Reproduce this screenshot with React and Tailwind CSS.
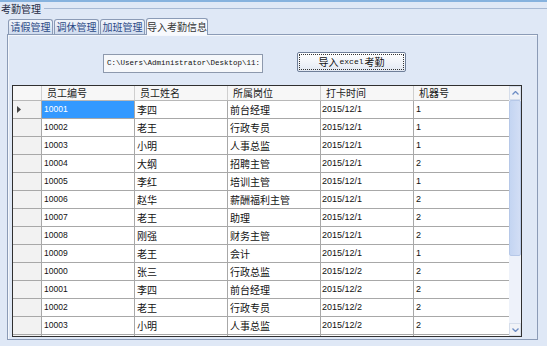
const rows = [
  ["10001", "李四", "前台经理", "2015/12/1", "1"],
  ["10002", "老王", "行政专员", "2015/12/1", "1"],
  ["10003", "小明", "人事总监", "2015/12/1", "1"],
  ["10004", "大纲", "招聘主管", "2015/12/1", "2"],
  ["10005", "李红", "培训主管", "2015/12/1", "1"],
  ["10006", "赵华", "薪酬福利主管", "2015/12/1", "2"],
  ["10007", "老王", "助理", "2015/12/1", "2"],
  ["10008", "刚强", "财务主管", "2015/12/1", "2"],
  ["10009", "老王", "会计", "2015/12/1", "1"],
  ["10000", "张三", "行政总监", "2015/12/2", "2"],
  ["10001", "李四", "前台经理", "2015/12/2", "2"],
  ["10002", "老王", "行政专员", "2015/12/2", "2"],
  ["10003", "小明", "人事总监", "2015/12/2", "2"],
  ["10004", "大纲", "招聘主管", "2015/12/2", "2"],
];

const cn = "font-['Noto_Sans_CJK_SC',sans-serif]";
const mono = "font-['Liberation_Mono',monospace]";
const sans = "font-['Liberation_Sans',sans-serif]";
const tabs = ["请假管理", "调休管理", "加班管理"];

const App = () => {
  return (
    <div className={`flex h-[346px] w-[547px] flex-col overflow-hidden bg-[#dfe8f6] ${cn}`}>
      <div className="h-[2px] bg-[#86b2de]" />

      {/* group box title */}
      <div className="flex h-[13px] items-center">
        <span className="pl-[1px] pr-[3px] text-[10px] leading-none text-[#1e2a44]">考勤管理</span>
        <div className="h-[1px] flex-1 bg-[#a7b9d4]" />
      </div>

      {/* tabs */}
      <div className="mt-[3px] flex h-[16px] items-end pl-[8px]">
        {tabs.map((t) => (
          <div
            key={t}
            className="mr-[1px] flex h-[15px] w-[45px] items-center justify-center rounded-t-[3px] border border-b-0 border-[#8b9bb6] bg-gradient-to-b from-[#f3f6fb] to-[#cfdbee] text-[10px] leading-none text-[#2c4a86]"
          >
            {t}
          </div>
        ))}
        <div className="relative top-[1px] flex h-[17px] w-[62px] items-center justify-center rounded-t-[3px] border border-b-0 border-[#8b9bb6] bg-[#f7f9fd] text-[10px] leading-none text-[#333]">
          导入考勤信息
        </div>
      </div>

      {/* tab page */}
      <div className="ml-[7px] flex h-[306px] w-[531px] flex-col border border-[#8b9bb6] bg-[#dfe8f6] shadow-[inset_1px_1px_0_#f4f7fc]">
        <div className="mt-[17px] flex h-[20px] items-start">
          <div className={`ml-[95px] mt-[2px] flex h-[19px] w-[160px] items-center overflow-hidden border border-[#8d99ad] bg-[#f6f8fb] pl-[3px] text-[7.5px] text-[#111] ${mono}`}>
            C:\Users\Administrator\Desktop\11:
          </div>
          <div className="ml-[34px] flex h-[20px] w-[109px] items-center justify-center rounded-[2px] border border-[#6f7f99] bg-gradient-to-b from-[#ffffff] to-[#e3e9f3] p-[1px]">
            <div className="flex h-full w-full items-center justify-center border border-dotted border-[#333] text-[10px] leading-none text-[#111]">
              导入<span className={`px-[1px] text-[8px] ${mono}`}>excel</span>考勤
            </div>
          </div>
        </div>

        {/* data grid */}
        <div className="ml-[4px] mt-[13px] flex h-[252px] w-[510px] border border-[#303030] bg-white">
          <div className="flex flex-1 flex-col overflow-hidden">
            <div className="flex h-[15px] shrink-0 border-b border-[#b8b8b8] bg-[#f7f7f7] text-[10px] leading-none text-[#222]">
              <div className="w-[29px] border-r border-[#cfcfcf]" />
              {["员工编号", "员工姓名", "所属岗位", "打卡时间"].map((h) => (
                <div key={h} className="flex w-[93px] items-center border-r border-[#cfcfcf] pl-[5px]">
                  {h}
                </div>
              ))}
              <div className="flex w-[95px] items-center pl-[5px]">机器号</div>
            </div>
            {rows.map((r, i) => (
              <div key={i} className="flex h-[18px] shrink-0 border-b border-[#a8a8a8] text-[#111]">
                <div className="flex w-[29px] items-center border-r border-[#a8a8a8] bg-[#f2f2f2] pl-[4px]">
                  {i === 0 && (
                    <svg width="5" height="7" viewBox="0 0 5 7">
                      <path d="M0 0 L4 3.5 L0 7 Z" fill="#444" />
                    </svg>
                  )}
                </div>
                <div
                  className={`flex w-[93px] items-center border-r border-[#a8a8a8] pl-[2px] text-[8.5px] ${sans} ${
                    i === 0 ? "bg-[#3399ff] text-white" : ""
                  }`}
                >
                  {r[0]}
                </div>
                <div className="flex w-[93px] items-center border-r border-[#a8a8a8] pl-[2px] text-[10px] leading-none">
                  {r[1]}
                </div>
                <div className="flex w-[93px] items-center border-r border-[#a8a8a8] pl-[2px] text-[10px] leading-none">
                  {r[2]}
                </div>
                <div className={`flex w-[93px] items-center border-r border-[#a8a8a8] pl-[1px] text-[9px] ${sans}`}>
                  {r[3]}
                </div>
                <div className={`flex w-[95px] items-center pl-[2px] text-[9px] ${sans}`}>{r[4]}</div>
              </div>
            ))}
          </div>

          {/* vertical scrollbar */}
          <div className="flex w-[12px] flex-col bg-[#eef2fa]">
            <div className="flex h-[14px] items-center justify-center border border-[#d6deeb] bg-[#f1f3f7]">
              <svg width="7" height="4" viewBox="0 0 7 4">
                <path d="M0.5 3.5 L3.5 0.5 L6.5 3.5" fill="none" stroke="#6c8cc4" strokeWidth="1.3" />
              </svg>
            </div>
            <div className="h-[156px] rounded-[2px] border border-[#b6c8e8] bg-gradient-to-r from-[#c4d5f2] to-[#d2def5]" />
            <div className="flex-1" />
            <div className="flex h-[13px] items-center justify-center border border-[#d6deeb] bg-[#f1f3f7]">
              <svg width="7" height="4" viewBox="0 0 7 4">
                <path d="M0.5 0.5 L3.5 3.5 L6.5 0.5" fill="none" stroke="#6c8cc4" strokeWidth="1.3" />
              </svg>
            </div>
          </div>
        </div>
      </div>
    </div>
  );
};

export default App;
